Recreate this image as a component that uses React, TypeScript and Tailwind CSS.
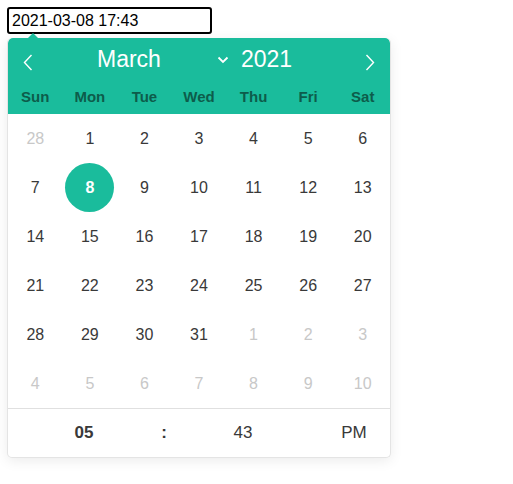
import React from 'react';

const weekdays = ['Sun', 'Mon', 'Tue', 'Wed', 'Thu', 'Fri', 'Sat'];

type Day = { n: number; muted?: boolean; selected?: boolean };

const buildDays = (): Day[] => {
  const days: Day[] = [{ n: 28, muted: true }];
  for (let i = 1; i <= 31; i++) days.push({ n: i, selected: i === 8 });
  for (let i = 1; i <= 10; i++) days.push({ n: i, muted: true });
  return days;
};

const ChevronLeft = () => (
  <svg width="10" height="17" viewBox="0 0 10 17" fill="none">
    <path d="M8.5 1 L1.5 8.5 L8.5 16" stroke="white" strokeWidth="1.4" />
  </svg>
);

const ChevronRight = () => (
  <svg width="10" height="17" viewBox="0 0 10 17" fill="none">
    <path d="M1.5 1 L8.5 8.5 L1.5 16" stroke="white" strokeWidth="1.4" />
  </svg>
);

const ChevronDown = () => (
  <svg width="12" height="8" viewBox="0 0 12 8" fill="none">
    <path d="M1.5 1.5 L6 6 L10.5 1.5" stroke="white" strokeWidth="1.8" />
  </svg>
);

export default function App() {
  const days = buildDays();

  return (
    <div className="bg-white min-h-[484px] p-[7px] font-['Liberation_Sans',Arial,sans-serif]">
      {/* Input */}
      <div className="relative w-[205px]">
        <div className="h-[27px] w-[205px] border-2 border-black rounded-[3px] pl-[3px] flex items-center text-[16px] text-black leading-none">
          2021-03-08 17:43
        </div>
        <div className="absolute left-[21px] top-[26px] w-0 h-0 border-l-[5px] border-r-[5px] border-b-[5px] border-l-transparent border-r-transparent border-b-[#1abc9c]" />
      </div>

      {/* Calendar */}
      <div className="mt-[4px] w-[384px] rounded-[5px] bg-white shadow-[0_3px_13px_rgba(0,0,0,0.08)] border border-[#e4e4e4] border-t-0 overflow-hidden">
        <div className="bg-[#1abc9c] rounded-t-[5px]">
          {/* Month row */}
          <div className="h-[42px] flex items-center">
            <div className="w-[40px] flex justify-center pt-[6px]">
              <ChevronLeft />
            </div>
            <div className="flex-1 flex items-center text-white text-[23px] leading-none">
              <span className="ml-[49px]">March</span>
              <span className="ml-[56px] mt-[2px]">
                <ChevronDown />
              </span>
              <span className="ml-[12px]">2021</span>
            </div>
            <div className="w-[40px] flex justify-center pt-[6px]">
              <ChevronRight />
            </div>
          </div>
          {/* Weekdays */}
          <div className="h-[34px] grid grid-cols-7 items-center">
            {weekdays.map((w) => (
              <div key={w} className="text-center text-[15px] font-bold text-[#0d5c4b] leading-none pb-[1px]">
                {w}
              </div>
            ))}
          </div>
        </div>

        {/* Days */}
        <div className="grid grid-cols-7">
          {days.map((d, i) => (
            <div key={i} className="h-[49px] flex items-center justify-center">
              {d.selected ? (
                <div className="w-[49px] h-[49px] rounded-full bg-[#1abc9c] text-white font-bold text-[16px] flex items-center justify-center">
                  {d.n}
                </div>
              ) : (
                <span className={`text-[16px] ${d.muted ? 'text-[#c8c8c8]' : 'text-[#393939]'}`}>{d.n}</span>
              )}
            </div>
          ))}
        </div>

        {/* Time */}
        <div className="h-[49px] border-t border-[#e0e0e0] flex items-center text-[17px] text-[#393939]">
          <div className="w-[152px] text-center font-bold">05</div>
          <div className="w-[8px] text-center font-bold">:</div>
          <div className="w-[150px] text-center">43</div>
          <div className="flex-1 text-center">PM</div>
        </div>
      </div>
    </div>
  );
}
